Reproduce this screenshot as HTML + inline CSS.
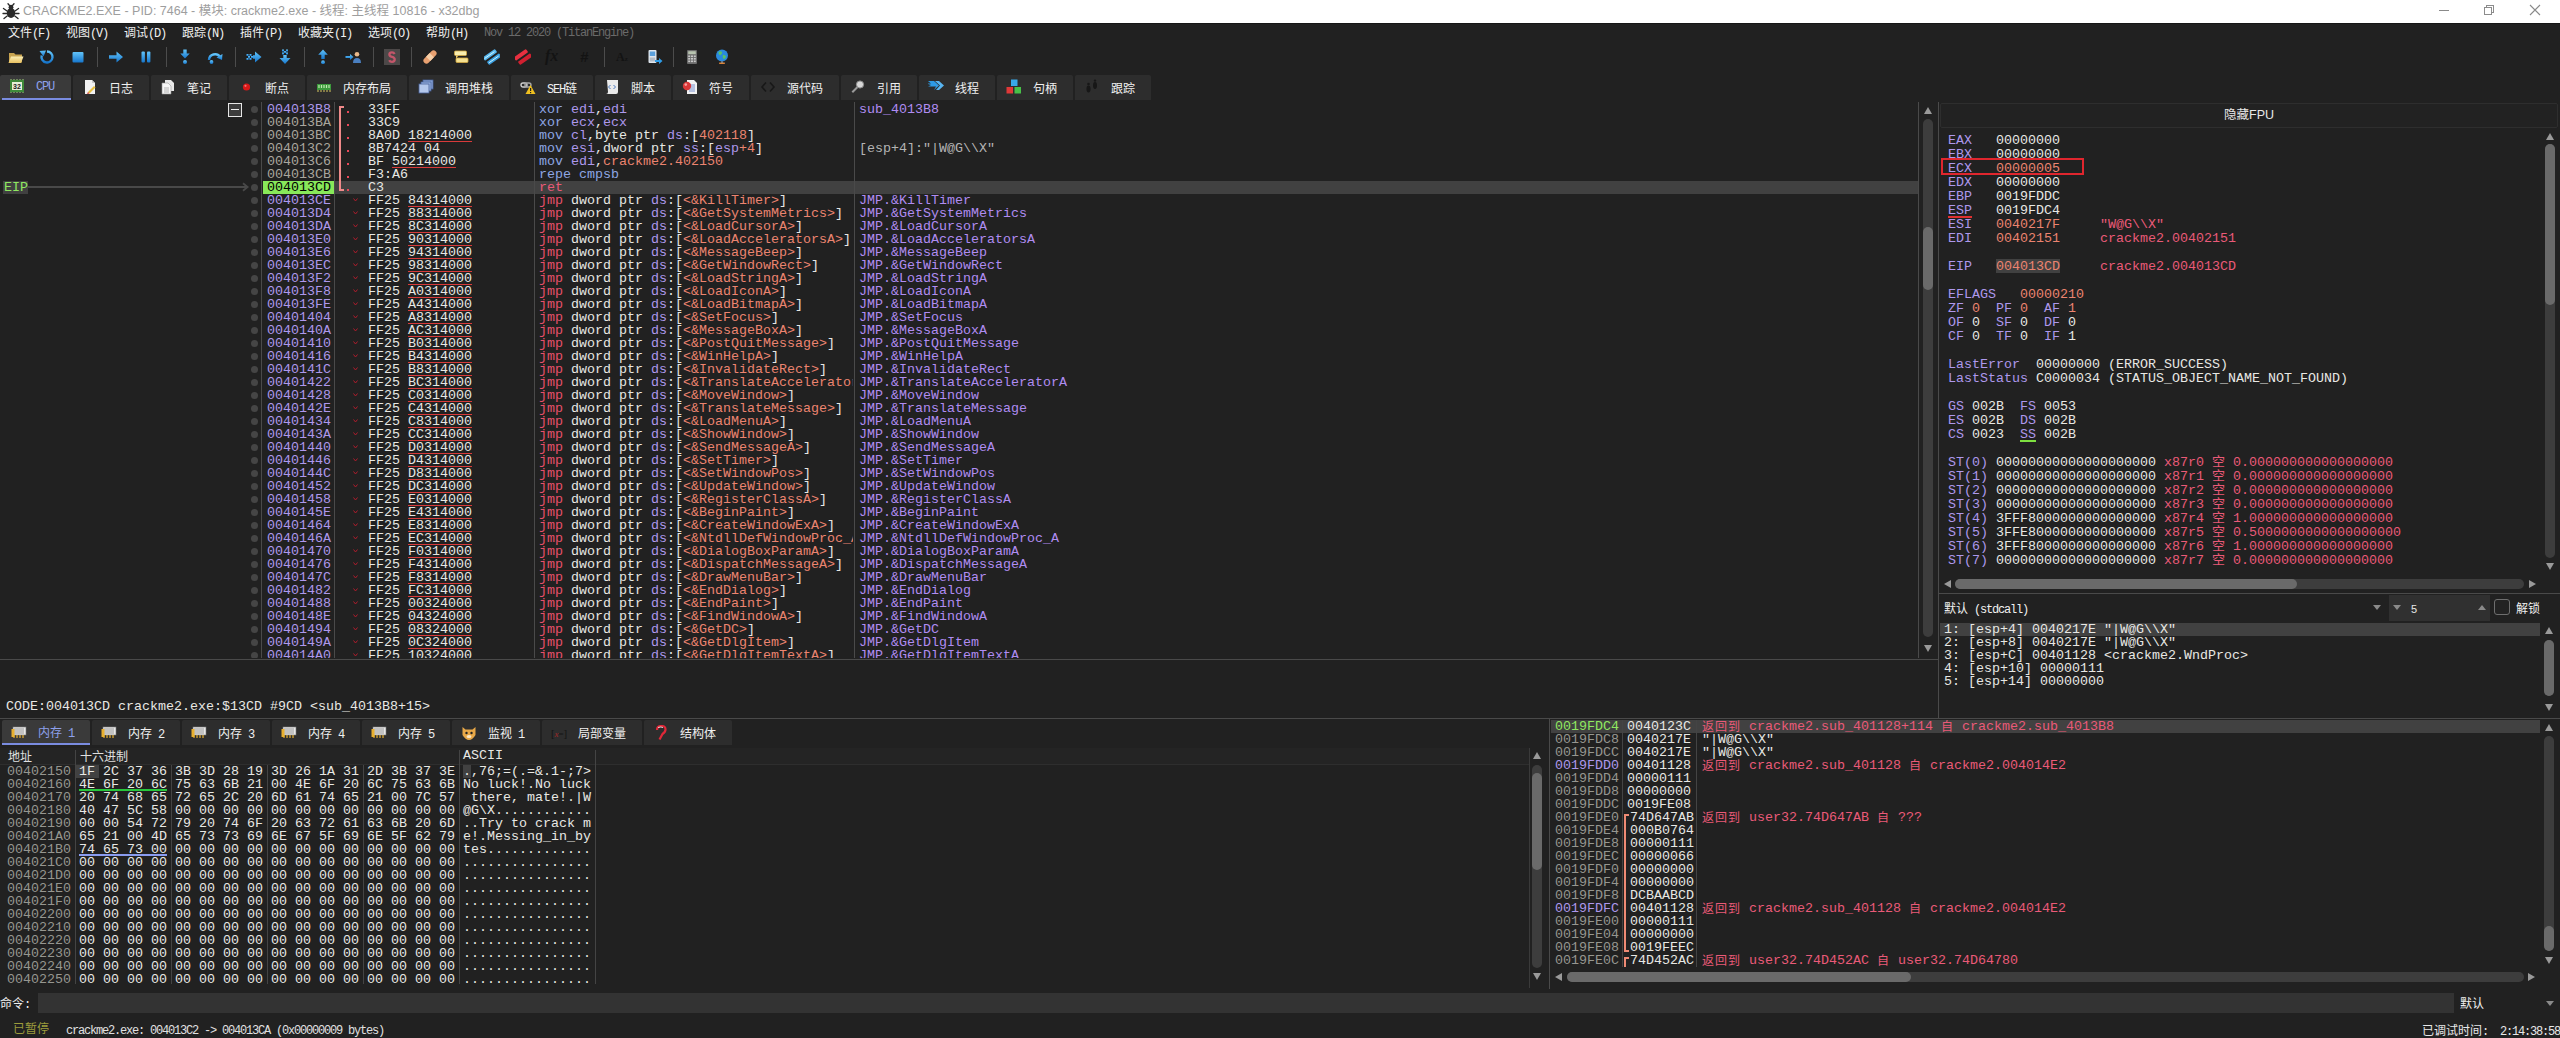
<!DOCTYPE html>
<html lang="zh"><head><meta charset="utf-8"><title>x32dbg</title><style>
html,body{margin:0;padding:0;background:#212121;}
body{width:2560px;height:1038px;position:relative;overflow:hidden;font-family:"Liberation Sans","Noto Sans CJK SC",sans-serif;color:#e8e8e8;}
div,span,i,b{box-sizing:border-box;}
.a{position:absolute;}
.m{position:absolute;white-space:pre;font-family:"Liberation Mono","Noto Sans CJK SC",monospace;font-size:13.333px;line-height:13px;height:13px;letter-spacing:0;}
.r{position:absolute;white-space:pre;font-family:"Liberation Mono","Noto Sans CJK SC",monospace;font-size:13.333px;line-height:14px;height:14px;}
.u{position:absolute;white-space:pre;font-family:"Liberation Mono","Noto Sans CJK SC",monospace;font-size:12px;letter-spacing:-1.2px;line-height:14px;}
.u b{font-weight:normal;font-family:"Noto Sans CJK SC",sans-serif;letter-spacing:0;font-size:12px;}
.tab{position:absolute;background:#2d2d2d;border-radius:2px 2px 0 0;}
.tab.act{background:#3a3a3a;}
.tab .u{top:6px;}
.k{font-size:12px;letter-spacing:1px;position:relative;top:0.5px}
.vl{position:absolute;width:1px;background:#4a4a4a;}
.hl{position:absolute;height:1px;background:#4a4a4a;}
.sel{position:absolute;background:#414141;}
.dot{position:absolute;width:7px;height:7px;border-radius:4px;background:#454545;}
/* colours */
.cp{color:#ae98ec}.cg{color:#aaa69e}.cw{color:#e8e8e4}.cs{color:#ec8470}.cr{color:#ea5a78}.cb{color:#8ea6e4}.cj{color:#e8506a}.cc{color:#b08cf2}.cd{color:#969690}.cy{color:#b4b4b4}
.ul{text-decoration:underline;text-decoration-color:#d83a3a;text-decoration-thickness:1px;text-underline-offset:2px;text-decoration-skip-ink:none;}
.ulr{text-decoration:underline;text-decoration-color:#e03030;text-decoration-thickness:2px;text-underline-offset:2px;text-decoration-skip-ink:none;}
.ulg{text-decoration:underline;text-decoration-color:#7ee040;text-decoration-thickness:2px;text-underline-offset:2px;text-decoration-skip-ink:none;}
.trk{position:absolute;background:#3d3d3d;border-radius:5px;}
.thm{position:absolute;background:#6a6a6a;border-radius:5px;}
.tu,.td,.tl,.tr{position:absolute;width:0;height:0;border:4px solid transparent;}
.tu{border-bottom:7px solid #9a9a9a;border-top:none;}
.td{border-top:7px solid #9a9a9a;border-bottom:none;}
.tl{border-right:7px solid #9a9a9a;border-left:none;}
.tr{border-left:7px solid #9a9a9a;border-right:none;}
</style></head><body>

<div class="a" style="left:0;top:0;width:2560px;height:23px;background:#fff"></div>
<svg class="a" style="left:2px;top:3px" width="18" height="17" viewBox="0 0 18 17"><g fill="#2a2a2a" stroke="#2a2a2a" stroke-width="1.3" stroke-linecap="round"><ellipse cx="9" cy="10" rx="4.2" ry="5" stroke="none"/><circle cx="9" cy="4.2" r="2.4" stroke="none"/><path d="M5 8 L1.5 5.5 M5 10.5 L1 10.5 M5.2 13 L2 15.5 M13 8 L16.5 5.5 M13 10.5 L17 10.5 M12.8 13 L16 15.5 M7.5 2.5 L6 0.8 M10.5 2.5 L12 0.8" fill="none"/></g></svg>
<div class="a" id="ttl" style="left:23px;top:3px;font-size:12.5px;line-height:16px;color:#9e9e9e;white-space:pre">CRACKME2.EXE - PID: 7464 - 模块: crackme2.exe - 线程: 主线程 10816 - x32dbg</div>
<div class="a" style="left:2439px;top:10px;width:10px;height:1px;background:#8a8a8a"></div>
<div class="a" style="left:2484px;top:7px;width:8px;height:8px;border:1px solid #8c8c8c;background:#fff;z-index:2"></div>
<div class="a" style="left:2486px;top:5px;width:8px;height:8px;border:1px solid #8c8c8c"></div>
<div class="a" style="left:0;top:23px;width:2560px;height:1px;background:#161616"></div>
<svg class="a" style="left:2529px;top:4px" width="12" height="12"><path d="M1 1 L11 11 M11 1 L1 11" stroke="#8a8a8a" stroke-width="1.1" fill="none"/></svg>
<div class="u" style="left:8px;top:25px;color:#f0f0f0;"><b>文件</b>(F)</div>
<div class="u" style="left:66px;top:25px;color:#f0f0f0;"><b>视图</b>(V)</div>
<div class="u" style="left:124px;top:25px;color:#f0f0f0;"><b>调试</b>(D)</div>
<div class="u" style="left:182px;top:25px;color:#f0f0f0;"><b>跟踪</b>(N)</div>
<div class="u" style="left:240px;top:25px;color:#f0f0f0;"><b>插件</b>(P)</div>
<div class="u" style="left:298px;top:25px;color:#f0f0f0;"><b>收藏夹</b>(I)</div>
<div class="u" style="left:368px;top:25px;color:#f0f0f0;"><b>选项</b>(O)</div>
<div class="u" style="left:426px;top:25px;color:#f0f0f0;"><b>帮助</b>(H)</div>
<div class="u" style="left:484px;top:26px;color:#6a6a6a;">Nov 12 2020 (TitanEngine)</div>
<svg width="0" height="0" style="position:absolute"><defs><linearGradient id="gb" x1="0" y1="0" x2="0" y2="1"><stop offset="0" stop-color="#62c4fa"/><stop offset="1" stop-color="#1676cc"/></linearGradient><linearGradient id="gy" x1="0" y1="0" x2="0" y2="1"><stop offset="0" stop-color="#fbeeb4"/><stop offset="1" stop-color="#e8c060"/></linearGradient></defs></svg>
<div class="a" style="left:97px;top:47px;width:1px;height:20px;background:#4c4c4c"></div>
<div class="a" style="left:166px;top:47px;width:1px;height:20px;background:#4c4c4c"></div>
<div class="a" style="left:235px;top:47px;width:1px;height:20px;background:#4c4c4c"></div>
<div class="a" style="left:304px;top:47px;width:1px;height:20px;background:#4c4c4c"></div>
<div class="a" style="left:373px;top:47px;width:1px;height:20px;background:#4c4c4c"></div>
<div class="a" style="left:411px;top:47px;width:1px;height:20px;background:#4c4c4c"></div>
<div class="a" style="left:604px;top:47px;width:1px;height:20px;background:#4c4c4c"></div>
<div class="a" style="left:673px;top:47px;width:1px;height:20px;background:#4c4c4c"></div>
<svg class="a" style="left:8px;top:49px" width="16" height="16" viewBox="0 0 16 16"><path d="M1 4 h5 l1.5 1.5 h6.5 v8 h-13z" fill="#c8a450"/><path d="M0.5 14 l2.500 -6.500 h12.500 l-2.500 6.500z" fill="url(#gy)"/></svg>
<svg class="a" style="left:39px;top:49px" width="16" height="16" viewBox="0 0 16 16"><path d="M8 2.5 a5.5 5.5 0 1 1 -5.3 4" fill="none" stroke="url(#gb)" stroke-width="2.4"/><path d="M0.5 2 L7 1.5 L4.5 7.5z" fill="url(#gb)"/></svg>
<svg class="a" style="left:69.5px;top:49px" width="16" height="16" viewBox="0 0 16 16"><rect x="2.500" y="3" width="11" height="10.500" rx="1" fill="url(#gb)"/></svg>
<svg class="a" style="left:108px;top:49px" width="16" height="16" viewBox="0 0 16 16"><path d="M1 6.3 h7.5 v-3.8 l6.5 5.5 l-6.5 5.5 v-3.8 h-7.5z" fill="url(#gb)"/></svg>
<svg class="a" style="left:138px;top:49px" width="16" height="16" viewBox="0 0 16 16"><rect x="3.5" y="2.5" width="3.4" height="11" rx="1" fill="url(#gb)"/><rect x="9" y="2.5" width="3.4" height="11" rx="1" fill="url(#gb)"/></svg>
<svg class="a" style="left:176.5px;top:49px" width="16" height="16" viewBox="0 0 16 16"><path d="M6.3 0.5 h3.4 v4 h3 l-4.7 5 l-4.7 -5 h3z" fill="url(#gb)"/><circle cx="8" cy="13" r="2" fill="url(#gb)"/></svg>
<svg class="a" style="left:207px;top:49px" width="16" height="16" viewBox="0 0 16 16"><path d="M2 11 a6 6 0 0 1 11 -3" fill="none" stroke="url(#gb)" stroke-width="2.4"/><path d="M15.5 5 l-0.5 6 l-5.5 -2.5z" fill="url(#gb)"/><circle cx="4.5" cy="13" r="1.9" fill="url(#gb)"/></svg>
<svg class="a" style="left:246px;top:49px" width="16" height="16" viewBox="0 0 16 16"><path d="M7 6.3 h2 v-3.8 l6.5 5.5 l-6.5 5.5 v-3.8 h-2z" fill="url(#gb)"/><g fill="url(#gb)"><rect x="0.5" y="5" width="2" height="2"/><rect x="3.5" y="5" width="2" height="2"/><rect x="0.5" y="9" width="2" height="2"/><rect x="3.5" y="9" width="2" height="2"/><rect x="2" y="7" width="2" height="2"/><rect x="5" y="7" width="2" height="2"/></g></svg>
<svg class="a" style="left:276.5px;top:49px" width="16" height="16" viewBox="0 0 16 16"><path d="M6.3 6 v3 h-3.8 l5.5 6 l5.5 -6 h-3.8 v-3z" fill="url(#gb)"/><g fill="url(#gb)"><rect x="5" y="0.5" width="2" height="2"/><rect x="9" y="0.5" width="2" height="2"/><rect x="7" y="2" width="2" height="2"/><rect x="5" y="3.5" width="2" height="2"/><rect x="9" y="3.5" width="2" height="2"/></g></svg>
<svg class="a" style="left:314.5px;top:49px" width="16" height="16" viewBox="0 0 16 16"><path d="M8 0.5 l4.8 5.2 h-3.1 v4.3 h-3.4 v-4.3 h-3.1z" fill="url(#gb)"/><circle cx="8" cy="13.2" r="1.9" fill="url(#gb)"/></svg>
<svg class="a" style="left:345px;top:49px" width="16" height="16" viewBox="0 0 16 16"><path d="M0.5 7 h4.5 v-2 l3.5 3 l-3.5 3 v-2 h-4.5z" fill="url(#gb)"/><circle cx="12" cy="5.3" r="2.3" fill="#e9b98a"/><path d="M8 14 q0 -5 4 -5 q4 0 4 5z" fill="#4a7fc0"/></svg>
<svg class="a" style="left:384px;top:49px" width="16" height="16" viewBox="0 0 16 16"><rect x="0" y="0" width="16" height="16" fill="#4c4848"/><path d="M10.6 5 q-0.800 -1.600 -2.600 -1.600 q-2.600 0 -2.600 2.100 q0 1.700 2.600 2.400 q2.700 0.700 2.700 2.600 q0 2.300 -2.700 2.300 q-2 0 -2.800 -1.600" fill="none" stroke="#c4566a" stroke-width="2.3"/></svg>
<svg class="a" style="left:422px;top:49px" width="16" height="16" viewBox="0 0 16 16"><g transform="rotate(-45 8 8)"><rect x="0" y="5" width="16" height="6" rx="3" fill="#e8a070"/><rect x="5.5" y="5" width="5" height="6" fill="#f6cfa8"/></g></svg>
<svg class="a" style="left:453px;top:49px" width="16" height="16" viewBox="0 0 16 16"><rect x="1.500" y="2" width="12" height="4.500" rx="1" fill="#f8eeb0" stroke="#d4a840" stroke-width="0.8"/><rect x="3" y="9" width="12" height="4.500" rx="1" fill="#f4e090" stroke="#d4a840" stroke-width="0.8"/><path d="M3 6.500 l0 3 l2.500 -3z" fill="#f0d070"/></svg>
<svg class="a" style="left:483.5px;top:49px" width="16" height="16" viewBox="0 0 16 16"><g transform="rotate(-35 8 8)"><rect x="0" y="3" width="15" height="4" rx="1" fill="#58b6ee"/><rect x="1" y="9" width="15" height="4" rx="1" fill="#3c9fe0"/><path d="M1 5 h12 M2 11 h12" stroke="#dff" stroke-width="0.8"/></g></svg>
<svg class="a" style="left:515px;top:49px" width="16" height="16" viewBox="0 0 16 16"><g transform="rotate(-35 8 8)"><rect x="0" y="3" width="15" height="4" rx="1" fill="#e83040"/><rect x="1" y="9" width="15" height="4" rx="1" fill="#d02030"/></g></svg>
<div class="a" style="left:545px;top:46px;font:italic bold 16px 'Liberation Serif',serif;color:#131313;line-height:20px">fx</div>
<div class="a" style="left:580px;top:47px;font:italic bold 15px 'Liberation Sans',sans-serif;color:#131313;line-height:20px">#</div>
<div class="a" style="left:616px;top:49px;font:bold 12px 'Liberation Serif',serif;color:#131313;line-height:16px">A<span style="font-size:7px">z</span></div>
<svg class="a" style="left:647px;top:49px" width="16" height="16" viewBox="0 0 16 16"><rect x="1.5" y="1" width="8" height="13" rx="1" fill="#dfe6ee"/><rect x="2.8" y="2.5" width="5.4" height="4.5" fill="#5aa0dc"/><rect x="2.8" y="8.5" width="5.4" height="4" fill="#b4bcc6"/><path d="M8 11 h4 v-2 l3.5 3 l-3.5 3 v-2 h-4z" fill="#2e9be6"/></svg>
<svg class="a" style="left:683.5px;top:49px" width="16" height="16" viewBox="0 0 16 16"><rect x="3" y="1" width="10" height="14" rx="1" fill="#6c6c6c"/><rect x="4.2" y="2.2" width="7.6" height="3" fill="#b8c4b0"/><g fill="#c8c8c8"><rect x="4.2" y="6.5" width="2" height="1.6"/><rect x="7" y="6.5" width="2" height="1.6"/><rect x="9.8" y="6.5" width="2" height="1.6"/><rect x="4.2" y="9" width="2" height="1.6"/><rect x="7" y="9" width="2" height="1.6"/><rect x="9.8" y="9" width="2" height="1.6"/><rect x="4.2" y="11.5" width="2" height="1.6"/><rect x="7" y="11.5" width="2" height="1.6"/><rect x="9.8" y="11.5" width="2" height="1.6"/></g></svg>
<svg class="a" style="left:714px;top:49px" width="16" height="16" viewBox="0 0 16 16"><circle cx="8" cy="6.5" r="6" fill="#2a8ade"/><path d="M4.5 3 q2 -1.5 3.5 0 q0.5 2 -1.5 3 q-2 0.5 -2 -3z M9 6 q2.5 -0.5 3 1.5 q-0.5 2.5 -2.5 2.5 q-1.5 -1.5 -0.5 -4z" fill="#58c468"/><rect x="5" y="13.5" width="6" height="1.5" rx="0.7" fill="#d8823a"/><rect x="7.3" y="12.3" width="1.4" height="1.6" fill="#a0a0a0"/></svg>
<div class="tab act" style="left:0px;top:75px;width:71px;height:25px"></div>
<svg class="a" style="left:9px;top:79px" width="16" height="16" viewBox="0 0 16 16"><rect x="1" y="1" width="14" height="12" fill="#3f8a3a"/><rect x="3" y="3" width="10" height="8" fill="#e8f0d8"/><path d="M2 0v1M5 0v1M8 0v1M11 0v1M14 0v1M2 13v1M5 13v1M8 13v1M11 13v1M14 13v1" stroke="#9fd07a"/><text x="8" y="10" font-size="7" font-family="Liberation Sans" font-weight="bold" text-anchor="middle" fill="#222">32</text></svg>
<div class="a" style="left:2px;top:98px;width:69px;height:2px;background:#7a8ce0"></div>
<div class="u" style="left:36px;top:80px;color:#8ea0ec;">CPU</div>
<div class="tab" style="left:73px;top:75px;width:76px;height:25px"></div>
<svg class="a" style="left:82px;top:79px" width="16" height="16" viewBox="0 0 16 16"><path d="M3 1 h7 l3 3 v11 h-10z" fill="#f2f2f2"/><path d="M10 1 v3 h3z" fill="#c8c8c8"/><path d="M6 13 l6 -6 l1.5 1.5 l-6 6z" fill="#e8c040"/><path d="M5 15 l1 -2 l1.5 1.5z" fill="#d03030"/></svg>
<div class="u" style="left:109px;top:81px;color:#f0f0f0;"><b>日志</b></div>
<div class="tab" style="left:151px;top:75px;width:76px;height:25px"></div>
<svg class="a" style="left:160px;top:79px" width="16" height="16" viewBox="0 0 16 16"><path d="M5 1 h6 l3 3 v8 h-9z" fill="#e8e8e8"/><path d="M2 4 h6 l3 3 v8 h-9z" fill="#f6f6f6" stroke="#999" stroke-width="0.6"/><path d="M4 9h5M4 11h5M4 13h5" stroke="#999" stroke-width="0.7"/></svg>
<div class="u" style="left:187px;top:81px;color:#f0f0f0;"><b>笔记</b></div>
<div class="tab" style="left:229px;top:75px;width:76px;height:25px"></div>
<svg class="a" style="left:238px;top:79px" width="16" height="16" viewBox="0 0 16 16"><circle cx="8.500" cy="8" r="3.600" fill="#d81818"/><circle cx="7.500" cy="6.800" r="1.100" fill="#f07070"/></svg>
<div class="u" style="left:265px;top:81px;color:#f0f0f0;"><b>断点</b></div>
<div class="tab" style="left:307px;top:75px;width:100px;height:25px"></div>
<svg class="a" style="left:316px;top:79px" width="16" height="16" viewBox="0 0 16 16"><rect x="1" y="5" width="14" height="6" fill="#3c9a3c"/><path d="M3 6v3M5.5 6v3M8 6v3M10.5 6v3M13 6v3" stroke="#bfe8b0" stroke-width="1.2"/><path d="M2 11v2M5 11v2M8 11v2M11 11v2M14 11v2" stroke="#d8c860" stroke-width="1"/></svg>
<div class="u" style="left:343px;top:81px;color:#f0f0f0;"><b>内存布局</b></div>
<div class="tab" style="left:409px;top:75px;width:100px;height:25px"></div>
<svg class="a" style="left:418px;top:79px" width="16" height="16" viewBox="0 0 16 16"><rect x="5" y="1" width="10" height="9" fill="#8aa6d8" stroke="#46609a" stroke-width="0.8"/><rect x="3" y="3" width="10" height="9" fill="#9ab4e2" stroke="#46609a" stroke-width="0.8"/><rect x="1" y="5" width="10" height="9" fill="#b4c8ec" stroke="#46609a" stroke-width="0.8"/></svg>
<div class="u" style="left:445px;top:81px;color:#f0f0f0;"><b>调用堆栈</b></div>
<div class="tab" style="left:511px;top:75px;width:82px;height:25px"></div>
<svg class="a" style="left:520px;top:79px" width="16" height="16" viewBox="0 0 16 16"><rect x="1" y="4" width="6" height="4" rx="2" fill="none" stroke="#d0d0d0" stroke-width="1.4"/><rect x="5" y="4" width="6" height="4" rx="2" fill="none" stroke="#a8a8a8" stroke-width="1.4"/><path d="M10.5 6 l5 9 h-10z" fill="#f0c020"/><rect x="10" y="9" width="1.2" height="3" fill="#222"/><rect x="10" y="13" width="1.2" height="1.2" fill="#222"/></svg>
<div class="u" style="left:547px;top:81px;color:#f0f0f0;">SEH<b>链</b></div>
<div class="tab" style="left:595px;top:75px;width:76px;height:25px"></div>
<svg class="a" style="left:604px;top:79px" width="16" height="16" viewBox="0 0 16 16"><path d="M3 1 h11 v12 q0 2 -2 2 h-10 q2 0 2 -2 z" fill="#eaeaea"/><path d="M6.5 6 l-2 2 l2 2 M9.5 6 l2 2 l-2 2" stroke="#4878c0" fill="none" stroke-width="1"/></svg>
<div class="u" style="left:631px;top:81px;color:#f0f0f0;"><b>脚本</b></div>
<div class="tab" style="left:673px;top:75px;width:76px;height:25px"></div>
<svg class="a" style="left:682px;top:79px" width="16" height="16" viewBox="0 0 16 16"><path d="M5 1 h7 l3 3 v11 h-10z" fill="#f2f2f2"/><path d="M7 6h6M7 8h6M7 10h6M7 12h6" stroke="#5a78c8" stroke-width="0.8"/><circle cx="5" cy="7" r="4.2" fill="#d83838"/><circle cx="3.8" cy="5.6" r="1.3" fill="#f4a0a0"/></svg>
<div class="u" style="left:709px;top:81px;color:#f0f0f0;"><b>符号</b></div>
<div class="tab" style="left:751px;top:75px;width:88px;height:25px"></div>
<svg class="a" style="left:760px;top:79px" width="16" height="16" viewBox="0 0 16 16"><path d="M6 3.5 l-4 4.5 l4 4.5 M10 3.5 l4 4.5 l-4 4.5" stroke="#181818" fill="none" stroke-width="1.6"/></svg>
<div class="u" style="left:787px;top:81px;color:#f0f0f0;"><b>源代码</b></div>
<div class="tab" style="left:841px;top:75px;width:76px;height:25px"></div>
<svg class="a" style="left:850px;top:79px" width="16" height="16" viewBox="0 0 16 16"><circle cx="10" cy="5.5" r="3.6" fill="#d8d8d8" stroke="#8a8a8a" stroke-width="1"/><path d="M7.3 8.2 l-5 5" stroke="#9a9a9a" stroke-width="2"/></svg>
<div class="u" style="left:877px;top:81px;color:#f0f0f0;"><b>引用</b></div>
<div class="tab" style="left:919px;top:75px;width:76px;height:25px"></div>
<svg class="a" style="left:928px;top:79px" width="16" height="16" viewBox="0 0 16 16"><path d="M0 2 l6 0 l5 4.5 l-5 4.5 l2 -3.5 h-8 l3 -1.5 l-5 -1.5 h5z" fill="#2e9be6"/><path d="M7 2 h4 l5 4.5 l-5 4.5 h-3 l4 -4.5z" fill="#58b4f0"/></svg>
<div class="u" style="left:955px;top:81px;color:#f0f0f0;"><b>线程</b></div>
<div class="tab" style="left:997px;top:75px;width:76px;height:25px"></div>
<svg class="a" style="left:1006px;top:79px" width="16" height="16" viewBox="0 0 16 16"><rect x="5" y="0.5" width="6.5" height="6.5" fill="#38a8e8"/><rect x="0.5" y="8" width="6.5" height="6.5" fill="#e03838"/><rect x="8.5" y="8" width="6.5" height="6.5" fill="#48c048"/></svg>
<div class="u" style="left:1033px;top:81px;color:#f0f0f0;"><b>句柄</b></div>
<div class="tab" style="left:1075px;top:75px;width:76px;height:25px"></div>
<svg class="a" style="left:1084px;top:79px" width="16" height="16" viewBox="0 0 16 16"><g fill="#171717"><ellipse cx="4.5" cy="10" rx="2" ry="3.4"/><circle cx="4.5" cy="5" r="1.3"/><ellipse cx="11" cy="6.5" rx="2" ry="3.4"/><circle cx="11" cy="1.6" r="1.2"/></g></svg>
<div class="u" style="left:1111px;top:81px;color:#f0f0f0;"><b>跟踪</b></div>
<div class="sel" style="left:335px;top:181px;width:1583px;height:13px"></div>
<div class="a" style="left:263px;top:181px;width:71px;height:13px;background:#88e85a"></div>
<div class="vl" style="left:261px;top:102px;height:556px"></div>
<div class="vl" style="left:334px;top:102px;height:556px"></div>
<div class="vl" style="left:534px;top:102px;height:556px"></div>
<div class="vl" style="left:854px;top:102px;height:556px"></div>
<div class="vl" style="left:1918px;top:102px;height:556px"></div>
<div class="hl" style="left:0;top:659px;width:1938px"></div>
<div class="a" style="left:228px;top:103px;width:14px;height:14px;border:1px solid #e6e6e6;background:#3c3c3c"></div><div class="a" style="left:231px;top:109px;width:8px;height:1px;background:#f0f0f0"></div>
<div class="a" style="left:3px;top:181px;width:25px;height:13px;background:#404040"></div>
<div class="m " style="left:4px;top:181px;color:#8fe860">EIP</div>
<div class="a" style="left:28px;top:186px;width:219px;height:2px;background:#494949"></div>
<svg class="a" style="left:240px;top:182px" width="10" height="10"><path d="M3 1.2 L7.600 5 L3 8.800" fill="none" stroke="#494949" stroke-width="1.8"/></svg>
<div class="a" style="left:339px;top:106px;width:2px;height:85px;background:#f08a8a"></div>
<div class="a" style="left:339px;top:106px;width:5px;height:2px;background:#f08a8a"></div>
<div class="a" style="left:339px;top:189px;width:5px;height:2px;background:#f08a8a"></div>
<div class="a" style="left:0;top:102px;width:1918px;height:556px;overflow:hidden">
<div class="dot" style="left:251px;top:4px"></div>
<div class="m cp" style="left:267px;top:1px;">004013B8</div>
<div class="a" style="left:347px;top:9px;width:2px;height:2px;background:#e8485a"></div>
<div class="m " style="left:368px;top:1px;"><span class="cw">33FF</span></div>
<div class="m " style="left:539px;top:1px;width:314px;overflow:hidden"><span class="cb">xor </span><span class="cp">edi</span><span class="cw">,</span><span class="cp">edi</span></div>
<div class="m " style="left:859px;top:1px;"><span class="cc">sub_4013B8</span></div>
<div class="dot" style="left:251px;top:17px"></div>
<div class="m cg" style="left:267px;top:14px;">004013BA</div>
<div class="a" style="left:347px;top:22px;width:2px;height:2px;background:#e8485a"></div>
<div class="m " style="left:368px;top:14px;"><span class="cw">33C9</span></div>
<div class="m " style="left:539px;top:14px;width:314px;overflow:hidden"><span class="cb">xor </span><span class="cp">ecx</span><span class="cw">,</span><span class="cp">ecx</span></div>
<div class="dot" style="left:251px;top:30px"></div>
<div class="m cg" style="left:267px;top:27px;">004013BC</div>
<div class="a" style="left:347px;top:35px;width:2px;height:2px;background:#e8485a"></div>
<div class="m " style="left:368px;top:27px;"><span class="cw">8A0D </span><span class="cw ul">18214000</span></div>
<div class="m " style="left:539px;top:27px;width:314px;overflow:hidden"><span class="cb">mov </span><span class="cp">cl</span><span class="cw">,byte ptr </span><span class="cp">ds</span><span class="cw">:[</span><span class="cs">402118</span><span class="cw">]</span></div>
<div class="dot" style="left:251px;top:43px"></div>
<div class="m cg" style="left:267px;top:40px;">004013C2</div>
<div class="a" style="left:347px;top:48px;width:2px;height:2px;background:#e8485a"></div>
<div class="m " style="left:368px;top:40px;"><span class="cw">8B7424 04</span></div>
<div class="m " style="left:539px;top:40px;width:314px;overflow:hidden"><span class="cb">mov </span><span class="cp">esi</span><span class="cw">,dword ptr </span><span class="cp">ss</span><span class="cw">:[</span><span class="cp">esp</span><span class="cs">+4</span><span class="cw">]</span></div>
<div class="m " style="left:859px;top:40px;"><span class="cy">[esp+4]:"|W@G\\X"</span></div>
<div class="dot" style="left:251px;top:56px"></div>
<div class="m cg" style="left:267px;top:53px;">004013C6</div>
<div class="a" style="left:347px;top:61px;width:2px;height:2px;background:#e8485a"></div>
<div class="m " style="left:368px;top:53px;"><span class="cw">BF </span><span class="cw ul">50214000</span></div>
<div class="m " style="left:539px;top:53px;width:314px;overflow:hidden"><span class="cb">mov </span><span class="cp">edi</span><span class="cw">,</span><span class="cs">crackme2.402150</span></div>
<div class="dot" style="left:251px;top:69px"></div>
<div class="m cg" style="left:267px;top:66px;">004013CB</div>
<div class="a" style="left:347px;top:74px;width:2px;height:2px;background:#e8485a"></div>
<div class="m " style="left:368px;top:66px;"><span class="cw">F3:A6</span></div>
<div class="m " style="left:539px;top:66px;width:314px;overflow:hidden"><span class="cb">repe cmpsb</span></div>
<div class="dot" style="left:251px;top:82px"></div>
<div class="m " style="left:267px;top:79px;color:#000">004013CD</div>
<div class="a" style="left:347px;top:87px;width:2px;height:2px;background:#e8485a"></div>
<div class="m " style="left:368px;top:79px;"><span class="cw">C3</span></div>
<div class="m " style="left:539px;top:79px;width:314px;overflow:hidden"><span class="cr">ret</span></div>
<div class="dot" style="left:251px;top:95px"></div>
<div class="m cp" style="left:267px;top:92px;">004013CE</div>
<svg class="a" style="left:353px;top:96px" width="6" height="5"><path d="M0.5 0.5 L2.5 3 L4.5 0.5" fill="none" stroke="#b01c2c" stroke-width="1"/></svg>
<div class="m " style="left:368px;top:92px;"><span class="cw">FF25 </span><span class="cw ul">84314000</span></div>
<div class="m " style="left:539px;top:92px;width:314px;overflow:hidden"><span class="cj">jmp </span><span class="cw">dword ptr </span><span class="cp">ds</span><span class="cw">:[</span><span class="cs">&lt;&amp;KillTimer&gt;</span><span class="cw">]</span></div>
<div class="m " style="left:859px;top:92px;"><span class="cc">JMP.&amp;KillTimer</span></div>
<div class="dot" style="left:251px;top:108px"></div>
<div class="m cp" style="left:267px;top:105px;">004013D4</div>
<svg class="a" style="left:353px;top:109px" width="6" height="5"><path d="M0.5 0.5 L2.5 3 L4.5 0.5" fill="none" stroke="#b01c2c" stroke-width="1"/></svg>
<div class="m " style="left:368px;top:105px;"><span class="cw">FF25 </span><span class="cw ul">88314000</span></div>
<div class="m " style="left:539px;top:105px;width:314px;overflow:hidden"><span class="cj">jmp </span><span class="cw">dword ptr </span><span class="cp">ds</span><span class="cw">:[</span><span class="cs">&lt;&amp;GetSystemMetrics&gt;</span><span class="cw">]</span></div>
<div class="m " style="left:859px;top:105px;"><span class="cc">JMP.&amp;GetSystemMetrics</span></div>
<div class="dot" style="left:251px;top:121px"></div>
<div class="m cp" style="left:267px;top:118px;">004013DA</div>
<svg class="a" style="left:353px;top:122px" width="6" height="5"><path d="M0.5 0.5 L2.5 3 L4.5 0.5" fill="none" stroke="#b01c2c" stroke-width="1"/></svg>
<div class="m " style="left:368px;top:118px;"><span class="cw">FF25 </span><span class="cw ul">8C314000</span></div>
<div class="m " style="left:539px;top:118px;width:314px;overflow:hidden"><span class="cj">jmp </span><span class="cw">dword ptr </span><span class="cp">ds</span><span class="cw">:[</span><span class="cs">&lt;&amp;LoadCursorA&gt;</span><span class="cw">]</span></div>
<div class="m " style="left:859px;top:118px;"><span class="cc">JMP.&amp;LoadCursorA</span></div>
<div class="dot" style="left:251px;top:134px"></div>
<div class="m cp" style="left:267px;top:131px;">004013E0</div>
<svg class="a" style="left:353px;top:135px" width="6" height="5"><path d="M0.5 0.5 L2.5 3 L4.5 0.5" fill="none" stroke="#b01c2c" stroke-width="1"/></svg>
<div class="m " style="left:368px;top:131px;"><span class="cw">FF25 </span><span class="cw ul">90314000</span></div>
<div class="m " style="left:539px;top:131px;width:314px;overflow:hidden"><span class="cj">jmp </span><span class="cw">dword ptr </span><span class="cp">ds</span><span class="cw">:[</span><span class="cs">&lt;&amp;LoadAcceleratorsA&gt;</span><span class="cw">]</span></div>
<div class="m " style="left:859px;top:131px;"><span class="cc">JMP.&amp;LoadAcceleratorsA</span></div>
<div class="dot" style="left:251px;top:147px"></div>
<div class="m cp" style="left:267px;top:144px;">004013E6</div>
<svg class="a" style="left:353px;top:148px" width="6" height="5"><path d="M0.5 0.5 L2.5 3 L4.5 0.5" fill="none" stroke="#b01c2c" stroke-width="1"/></svg>
<div class="m " style="left:368px;top:144px;"><span class="cw">FF25 </span><span class="cw ul">94314000</span></div>
<div class="m " style="left:539px;top:144px;width:314px;overflow:hidden"><span class="cj">jmp </span><span class="cw">dword ptr </span><span class="cp">ds</span><span class="cw">:[</span><span class="cs">&lt;&amp;MessageBeep&gt;</span><span class="cw">]</span></div>
<div class="m " style="left:859px;top:144px;"><span class="cc">JMP.&amp;MessageBeep</span></div>
<div class="dot" style="left:251px;top:160px"></div>
<div class="m cp" style="left:267px;top:157px;">004013EC</div>
<svg class="a" style="left:353px;top:161px" width="6" height="5"><path d="M0.5 0.5 L2.5 3 L4.5 0.5" fill="none" stroke="#b01c2c" stroke-width="1"/></svg>
<div class="m " style="left:368px;top:157px;"><span class="cw">FF25 </span><span class="cw ul">98314000</span></div>
<div class="m " style="left:539px;top:157px;width:314px;overflow:hidden"><span class="cj">jmp </span><span class="cw">dword ptr </span><span class="cp">ds</span><span class="cw">:[</span><span class="cs">&lt;&amp;GetWindowRect&gt;</span><span class="cw">]</span></div>
<div class="m " style="left:859px;top:157px;"><span class="cc">JMP.&amp;GetWindowRect</span></div>
<div class="dot" style="left:251px;top:173px"></div>
<div class="m cp" style="left:267px;top:170px;">004013F2</div>
<svg class="a" style="left:353px;top:174px" width="6" height="5"><path d="M0.5 0.5 L2.5 3 L4.5 0.5" fill="none" stroke="#b01c2c" stroke-width="1"/></svg>
<div class="m " style="left:368px;top:170px;"><span class="cw">FF25 </span><span class="cw ul">9C314000</span></div>
<div class="m " style="left:539px;top:170px;width:314px;overflow:hidden"><span class="cj">jmp </span><span class="cw">dword ptr </span><span class="cp">ds</span><span class="cw">:[</span><span class="cs">&lt;&amp;LoadStringA&gt;</span><span class="cw">]</span></div>
<div class="m " style="left:859px;top:170px;"><span class="cc">JMP.&amp;LoadStringA</span></div>
<div class="dot" style="left:251px;top:186px"></div>
<div class="m cp" style="left:267px;top:183px;">004013F8</div>
<svg class="a" style="left:353px;top:187px" width="6" height="5"><path d="M0.5 0.5 L2.5 3 L4.5 0.5" fill="none" stroke="#b01c2c" stroke-width="1"/></svg>
<div class="m " style="left:368px;top:183px;"><span class="cw">FF25 </span><span class="cw ul">A0314000</span></div>
<div class="m " style="left:539px;top:183px;width:314px;overflow:hidden"><span class="cj">jmp </span><span class="cw">dword ptr </span><span class="cp">ds</span><span class="cw">:[</span><span class="cs">&lt;&amp;LoadIconA&gt;</span><span class="cw">]</span></div>
<div class="m " style="left:859px;top:183px;"><span class="cc">JMP.&amp;LoadIconA</span></div>
<div class="dot" style="left:251px;top:199px"></div>
<div class="m cp" style="left:267px;top:196px;">004013FE</div>
<svg class="a" style="left:353px;top:200px" width="6" height="5"><path d="M0.5 0.5 L2.5 3 L4.5 0.5" fill="none" stroke="#b01c2c" stroke-width="1"/></svg>
<div class="m " style="left:368px;top:196px;"><span class="cw">FF25 </span><span class="cw ul">A4314000</span></div>
<div class="m " style="left:539px;top:196px;width:314px;overflow:hidden"><span class="cj">jmp </span><span class="cw">dword ptr </span><span class="cp">ds</span><span class="cw">:[</span><span class="cs">&lt;&amp;LoadBitmapA&gt;</span><span class="cw">]</span></div>
<div class="m " style="left:859px;top:196px;"><span class="cc">JMP.&amp;LoadBitmapA</span></div>
<div class="dot" style="left:251px;top:212px"></div>
<div class="m cp" style="left:267px;top:209px;">00401404</div>
<svg class="a" style="left:353px;top:213px" width="6" height="5"><path d="M0.5 0.5 L2.5 3 L4.5 0.5" fill="none" stroke="#b01c2c" stroke-width="1"/></svg>
<div class="m " style="left:368px;top:209px;"><span class="cw">FF25 </span><span class="cw ul">A8314000</span></div>
<div class="m " style="left:539px;top:209px;width:314px;overflow:hidden"><span class="cj">jmp </span><span class="cw">dword ptr </span><span class="cp">ds</span><span class="cw">:[</span><span class="cs">&lt;&amp;SetFocus&gt;</span><span class="cw">]</span></div>
<div class="m " style="left:859px;top:209px;"><span class="cc">JMP.&amp;SetFocus</span></div>
<div class="dot" style="left:251px;top:225px"></div>
<div class="m cp" style="left:267px;top:222px;">0040140A</div>
<svg class="a" style="left:353px;top:226px" width="6" height="5"><path d="M0.5 0.5 L2.5 3 L4.5 0.5" fill="none" stroke="#b01c2c" stroke-width="1"/></svg>
<div class="m " style="left:368px;top:222px;"><span class="cw">FF25 </span><span class="cw ul">AC314000</span></div>
<div class="m " style="left:539px;top:222px;width:314px;overflow:hidden"><span class="cj">jmp </span><span class="cw">dword ptr </span><span class="cp">ds</span><span class="cw">:[</span><span class="cs">&lt;&amp;MessageBoxA&gt;</span><span class="cw">]</span></div>
<div class="m " style="left:859px;top:222px;"><span class="cc">JMP.&amp;MessageBoxA</span></div>
<div class="dot" style="left:251px;top:238px"></div>
<div class="m cp" style="left:267px;top:235px;">00401410</div>
<svg class="a" style="left:353px;top:239px" width="6" height="5"><path d="M0.5 0.5 L2.5 3 L4.5 0.5" fill="none" stroke="#b01c2c" stroke-width="1"/></svg>
<div class="m " style="left:368px;top:235px;"><span class="cw">FF25 </span><span class="cw ul">B0314000</span></div>
<div class="m " style="left:539px;top:235px;width:314px;overflow:hidden"><span class="cj">jmp </span><span class="cw">dword ptr </span><span class="cp">ds</span><span class="cw">:[</span><span class="cs">&lt;&amp;PostQuitMessage&gt;</span><span class="cw">]</span></div>
<div class="m " style="left:859px;top:235px;"><span class="cc">JMP.&amp;PostQuitMessage</span></div>
<div class="dot" style="left:251px;top:251px"></div>
<div class="m cp" style="left:267px;top:248px;">00401416</div>
<svg class="a" style="left:353px;top:252px" width="6" height="5"><path d="M0.5 0.5 L2.5 3 L4.5 0.5" fill="none" stroke="#b01c2c" stroke-width="1"/></svg>
<div class="m " style="left:368px;top:248px;"><span class="cw">FF25 </span><span class="cw ul">B4314000</span></div>
<div class="m " style="left:539px;top:248px;width:314px;overflow:hidden"><span class="cj">jmp </span><span class="cw">dword ptr </span><span class="cp">ds</span><span class="cw">:[</span><span class="cs">&lt;&amp;WinHelpA&gt;</span><span class="cw">]</span></div>
<div class="m " style="left:859px;top:248px;"><span class="cc">JMP.&amp;WinHelpA</span></div>
<div class="dot" style="left:251px;top:264px"></div>
<div class="m cp" style="left:267px;top:261px;">0040141C</div>
<svg class="a" style="left:353px;top:265px" width="6" height="5"><path d="M0.5 0.5 L2.5 3 L4.5 0.5" fill="none" stroke="#b01c2c" stroke-width="1"/></svg>
<div class="m " style="left:368px;top:261px;"><span class="cw">FF25 </span><span class="cw ul">B8314000</span></div>
<div class="m " style="left:539px;top:261px;width:314px;overflow:hidden"><span class="cj">jmp </span><span class="cw">dword ptr </span><span class="cp">ds</span><span class="cw">:[</span><span class="cs">&lt;&amp;InvalidateRect&gt;</span><span class="cw">]</span></div>
<div class="m " style="left:859px;top:261px;"><span class="cc">JMP.&amp;InvalidateRect</span></div>
<div class="dot" style="left:251px;top:277px"></div>
<div class="m cp" style="left:267px;top:274px;">00401422</div>
<svg class="a" style="left:353px;top:278px" width="6" height="5"><path d="M0.5 0.5 L2.5 3 L4.5 0.5" fill="none" stroke="#b01c2c" stroke-width="1"/></svg>
<div class="m " style="left:368px;top:274px;"><span class="cw">FF25 </span><span class="cw ul">BC314000</span></div>
<div class="m " style="left:539px;top:274px;width:314px;overflow:hidden"><span class="cj">jmp </span><span class="cw">dword ptr </span><span class="cp">ds</span><span class="cw">:[</span><span class="cs">&lt;&amp;TranslateAcceleratorA&gt;</span><span class="cw">]</span></div>
<div class="m " style="left:859px;top:274px;"><span class="cc">JMP.&amp;TranslateAcceleratorA</span></div>
<div class="dot" style="left:251px;top:290px"></div>
<div class="m cp" style="left:267px;top:287px;">00401428</div>
<svg class="a" style="left:353px;top:291px" width="6" height="5"><path d="M0.5 0.5 L2.5 3 L4.5 0.5" fill="none" stroke="#b01c2c" stroke-width="1"/></svg>
<div class="m " style="left:368px;top:287px;"><span class="cw">FF25 </span><span class="cw ul">C0314000</span></div>
<div class="m " style="left:539px;top:287px;width:314px;overflow:hidden"><span class="cj">jmp </span><span class="cw">dword ptr </span><span class="cp">ds</span><span class="cw">:[</span><span class="cs">&lt;&amp;MoveWindow&gt;</span><span class="cw">]</span></div>
<div class="m " style="left:859px;top:287px;"><span class="cc">JMP.&amp;MoveWindow</span></div>
<div class="dot" style="left:251px;top:303px"></div>
<div class="m cp" style="left:267px;top:300px;">0040142E</div>
<svg class="a" style="left:353px;top:304px" width="6" height="5"><path d="M0.5 0.5 L2.5 3 L4.5 0.5" fill="none" stroke="#b01c2c" stroke-width="1"/></svg>
<div class="m " style="left:368px;top:300px;"><span class="cw">FF25 </span><span class="cw ul">C4314000</span></div>
<div class="m " style="left:539px;top:300px;width:314px;overflow:hidden"><span class="cj">jmp </span><span class="cw">dword ptr </span><span class="cp">ds</span><span class="cw">:[</span><span class="cs">&lt;&amp;TranslateMessage&gt;</span><span class="cw">]</span></div>
<div class="m " style="left:859px;top:300px;"><span class="cc">JMP.&amp;TranslateMessage</span></div>
<div class="dot" style="left:251px;top:316px"></div>
<div class="m cp" style="left:267px;top:313px;">00401434</div>
<svg class="a" style="left:353px;top:317px" width="6" height="5"><path d="M0.5 0.5 L2.5 3 L4.5 0.5" fill="none" stroke="#b01c2c" stroke-width="1"/></svg>
<div class="m " style="left:368px;top:313px;"><span class="cw">FF25 </span><span class="cw ul">C8314000</span></div>
<div class="m " style="left:539px;top:313px;width:314px;overflow:hidden"><span class="cj">jmp </span><span class="cw">dword ptr </span><span class="cp">ds</span><span class="cw">:[</span><span class="cs">&lt;&amp;LoadMenuA&gt;</span><span class="cw">]</span></div>
<div class="m " style="left:859px;top:313px;"><span class="cc">JMP.&amp;LoadMenuA</span></div>
<div class="dot" style="left:251px;top:329px"></div>
<div class="m cp" style="left:267px;top:326px;">0040143A</div>
<svg class="a" style="left:353px;top:330px" width="6" height="5"><path d="M0.5 0.5 L2.5 3 L4.5 0.5" fill="none" stroke="#b01c2c" stroke-width="1"/></svg>
<div class="m " style="left:368px;top:326px;"><span class="cw">FF25 </span><span class="cw ul">CC314000</span></div>
<div class="m " style="left:539px;top:326px;width:314px;overflow:hidden"><span class="cj">jmp </span><span class="cw">dword ptr </span><span class="cp">ds</span><span class="cw">:[</span><span class="cs">&lt;&amp;ShowWindow&gt;</span><span class="cw">]</span></div>
<div class="m " style="left:859px;top:326px;"><span class="cc">JMP.&amp;ShowWindow</span></div>
<div class="dot" style="left:251px;top:342px"></div>
<div class="m cp" style="left:267px;top:339px;">00401440</div>
<svg class="a" style="left:353px;top:343px" width="6" height="5"><path d="M0.5 0.5 L2.5 3 L4.5 0.5" fill="none" stroke="#b01c2c" stroke-width="1"/></svg>
<div class="m " style="left:368px;top:339px;"><span class="cw">FF25 </span><span class="cw ul">D0314000</span></div>
<div class="m " style="left:539px;top:339px;width:314px;overflow:hidden"><span class="cj">jmp </span><span class="cw">dword ptr </span><span class="cp">ds</span><span class="cw">:[</span><span class="cs">&lt;&amp;SendMessageA&gt;</span><span class="cw">]</span></div>
<div class="m " style="left:859px;top:339px;"><span class="cc">JMP.&amp;SendMessageA</span></div>
<div class="dot" style="left:251px;top:355px"></div>
<div class="m cp" style="left:267px;top:352px;">00401446</div>
<svg class="a" style="left:353px;top:356px" width="6" height="5"><path d="M0.5 0.5 L2.5 3 L4.5 0.5" fill="none" stroke="#b01c2c" stroke-width="1"/></svg>
<div class="m " style="left:368px;top:352px;"><span class="cw">FF25 </span><span class="cw ul">D4314000</span></div>
<div class="m " style="left:539px;top:352px;width:314px;overflow:hidden"><span class="cj">jmp </span><span class="cw">dword ptr </span><span class="cp">ds</span><span class="cw">:[</span><span class="cs">&lt;&amp;SetTimer&gt;</span><span class="cw">]</span></div>
<div class="m " style="left:859px;top:352px;"><span class="cc">JMP.&amp;SetTimer</span></div>
<div class="dot" style="left:251px;top:368px"></div>
<div class="m cp" style="left:267px;top:365px;">0040144C</div>
<svg class="a" style="left:353px;top:369px" width="6" height="5"><path d="M0.5 0.5 L2.5 3 L4.5 0.5" fill="none" stroke="#b01c2c" stroke-width="1"/></svg>
<div class="m " style="left:368px;top:365px;"><span class="cw">FF25 </span><span class="cw ul">D8314000</span></div>
<div class="m " style="left:539px;top:365px;width:314px;overflow:hidden"><span class="cj">jmp </span><span class="cw">dword ptr </span><span class="cp">ds</span><span class="cw">:[</span><span class="cs">&lt;&amp;SetWindowPos&gt;</span><span class="cw">]</span></div>
<div class="m " style="left:859px;top:365px;"><span class="cc">JMP.&amp;SetWindowPos</span></div>
<div class="dot" style="left:251px;top:381px"></div>
<div class="m cp" style="left:267px;top:378px;">00401452</div>
<svg class="a" style="left:353px;top:382px" width="6" height="5"><path d="M0.5 0.5 L2.5 3 L4.5 0.5" fill="none" stroke="#b01c2c" stroke-width="1"/></svg>
<div class="m " style="left:368px;top:378px;"><span class="cw">FF25 </span><span class="cw ul">DC314000</span></div>
<div class="m " style="left:539px;top:378px;width:314px;overflow:hidden"><span class="cj">jmp </span><span class="cw">dword ptr </span><span class="cp">ds</span><span class="cw">:[</span><span class="cs">&lt;&amp;UpdateWindow&gt;</span><span class="cw">]</span></div>
<div class="m " style="left:859px;top:378px;"><span class="cc">JMP.&amp;UpdateWindow</span></div>
<div class="dot" style="left:251px;top:394px"></div>
<div class="m cp" style="left:267px;top:391px;">00401458</div>
<svg class="a" style="left:353px;top:395px" width="6" height="5"><path d="M0.5 0.5 L2.5 3 L4.5 0.5" fill="none" stroke="#b01c2c" stroke-width="1"/></svg>
<div class="m " style="left:368px;top:391px;"><span class="cw">FF25 </span><span class="cw ul">E0314000</span></div>
<div class="m " style="left:539px;top:391px;width:314px;overflow:hidden"><span class="cj">jmp </span><span class="cw">dword ptr </span><span class="cp">ds</span><span class="cw">:[</span><span class="cs">&lt;&amp;RegisterClassA&gt;</span><span class="cw">]</span></div>
<div class="m " style="left:859px;top:391px;"><span class="cc">JMP.&amp;RegisterClassA</span></div>
<div class="dot" style="left:251px;top:407px"></div>
<div class="m cp" style="left:267px;top:404px;">0040145E</div>
<svg class="a" style="left:353px;top:408px" width="6" height="5"><path d="M0.5 0.5 L2.5 3 L4.5 0.5" fill="none" stroke="#b01c2c" stroke-width="1"/></svg>
<div class="m " style="left:368px;top:404px;"><span class="cw">FF25 </span><span class="cw ul">E4314000</span></div>
<div class="m " style="left:539px;top:404px;width:314px;overflow:hidden"><span class="cj">jmp </span><span class="cw">dword ptr </span><span class="cp">ds</span><span class="cw">:[</span><span class="cs">&lt;&amp;BeginPaint&gt;</span><span class="cw">]</span></div>
<div class="m " style="left:859px;top:404px;"><span class="cc">JMP.&amp;BeginPaint</span></div>
<div class="dot" style="left:251px;top:420px"></div>
<div class="m cp" style="left:267px;top:417px;">00401464</div>
<svg class="a" style="left:353px;top:421px" width="6" height="5"><path d="M0.5 0.5 L2.5 3 L4.5 0.5" fill="none" stroke="#b01c2c" stroke-width="1"/></svg>
<div class="m " style="left:368px;top:417px;"><span class="cw">FF25 </span><span class="cw ul">E8314000</span></div>
<div class="m " style="left:539px;top:417px;width:314px;overflow:hidden"><span class="cj">jmp </span><span class="cw">dword ptr </span><span class="cp">ds</span><span class="cw">:[</span><span class="cs">&lt;&amp;CreateWindowExA&gt;</span><span class="cw">]</span></div>
<div class="m " style="left:859px;top:417px;"><span class="cc">JMP.&amp;CreateWindowExA</span></div>
<div class="dot" style="left:251px;top:433px"></div>
<div class="m cp" style="left:267px;top:430px;">0040146A</div>
<svg class="a" style="left:353px;top:434px" width="6" height="5"><path d="M0.5 0.5 L2.5 3 L4.5 0.5" fill="none" stroke="#b01c2c" stroke-width="1"/></svg>
<div class="m " style="left:368px;top:430px;"><span class="cw">FF25 </span><span class="cw ul">EC314000</span></div>
<div class="m " style="left:539px;top:430px;width:314px;overflow:hidden"><span class="cj">jmp </span><span class="cw">dword ptr </span><span class="cp">ds</span><span class="cw">:[</span><span class="cs">&lt;&amp;NtdllDefWindowProc_A&gt;</span><span class="cw">]</span></div>
<div class="m " style="left:859px;top:430px;"><span class="cc">JMP.&amp;NtdllDefWindowProc_A</span></div>
<div class="dot" style="left:251px;top:446px"></div>
<div class="m cp" style="left:267px;top:443px;">00401470</div>
<svg class="a" style="left:353px;top:447px" width="6" height="5"><path d="M0.5 0.5 L2.5 3 L4.5 0.5" fill="none" stroke="#b01c2c" stroke-width="1"/></svg>
<div class="m " style="left:368px;top:443px;"><span class="cw">FF25 </span><span class="cw ul">F0314000</span></div>
<div class="m " style="left:539px;top:443px;width:314px;overflow:hidden"><span class="cj">jmp </span><span class="cw">dword ptr </span><span class="cp">ds</span><span class="cw">:[</span><span class="cs">&lt;&amp;DialogBoxParamA&gt;</span><span class="cw">]</span></div>
<div class="m " style="left:859px;top:443px;"><span class="cc">JMP.&amp;DialogBoxParamA</span></div>
<div class="dot" style="left:251px;top:459px"></div>
<div class="m cp" style="left:267px;top:456px;">00401476</div>
<svg class="a" style="left:353px;top:460px" width="6" height="5"><path d="M0.5 0.5 L2.5 3 L4.5 0.5" fill="none" stroke="#b01c2c" stroke-width="1"/></svg>
<div class="m " style="left:368px;top:456px;"><span class="cw">FF25 </span><span class="cw ul">F4314000</span></div>
<div class="m " style="left:539px;top:456px;width:314px;overflow:hidden"><span class="cj">jmp </span><span class="cw">dword ptr </span><span class="cp">ds</span><span class="cw">:[</span><span class="cs">&lt;&amp;DispatchMessageA&gt;</span><span class="cw">]</span></div>
<div class="m " style="left:859px;top:456px;"><span class="cc">JMP.&amp;DispatchMessageA</span></div>
<div class="dot" style="left:251px;top:472px"></div>
<div class="m cp" style="left:267px;top:469px;">0040147C</div>
<svg class="a" style="left:353px;top:473px" width="6" height="5"><path d="M0.5 0.5 L2.5 3 L4.5 0.5" fill="none" stroke="#b01c2c" stroke-width="1"/></svg>
<div class="m " style="left:368px;top:469px;"><span class="cw">FF25 </span><span class="cw ul">F8314000</span></div>
<div class="m " style="left:539px;top:469px;width:314px;overflow:hidden"><span class="cj">jmp </span><span class="cw">dword ptr </span><span class="cp">ds</span><span class="cw">:[</span><span class="cs">&lt;&amp;DrawMenuBar&gt;</span><span class="cw">]</span></div>
<div class="m " style="left:859px;top:469px;"><span class="cc">JMP.&amp;DrawMenuBar</span></div>
<div class="dot" style="left:251px;top:485px"></div>
<div class="m cp" style="left:267px;top:482px;">00401482</div>
<svg class="a" style="left:353px;top:486px" width="6" height="5"><path d="M0.5 0.5 L2.5 3 L4.5 0.5" fill="none" stroke="#b01c2c" stroke-width="1"/></svg>
<div class="m " style="left:368px;top:482px;"><span class="cw">FF25 </span><span class="cw ul">FC314000</span></div>
<div class="m " style="left:539px;top:482px;width:314px;overflow:hidden"><span class="cj">jmp </span><span class="cw">dword ptr </span><span class="cp">ds</span><span class="cw">:[</span><span class="cs">&lt;&amp;EndDialog&gt;</span><span class="cw">]</span></div>
<div class="m " style="left:859px;top:482px;"><span class="cc">JMP.&amp;EndDialog</span></div>
<div class="dot" style="left:251px;top:498px"></div>
<div class="m cp" style="left:267px;top:495px;">00401488</div>
<svg class="a" style="left:353px;top:499px" width="6" height="5"><path d="M0.5 0.5 L2.5 3 L4.5 0.5" fill="none" stroke="#b01c2c" stroke-width="1"/></svg>
<div class="m " style="left:368px;top:495px;"><span class="cw">FF25 </span><span class="cw ul">00324000</span></div>
<div class="m " style="left:539px;top:495px;width:314px;overflow:hidden"><span class="cj">jmp </span><span class="cw">dword ptr </span><span class="cp">ds</span><span class="cw">:[</span><span class="cs">&lt;&amp;EndPaint&gt;</span><span class="cw">]</span></div>
<div class="m " style="left:859px;top:495px;"><span class="cc">JMP.&amp;EndPaint</span></div>
<div class="dot" style="left:251px;top:511px"></div>
<div class="m cp" style="left:267px;top:508px;">0040148E</div>
<svg class="a" style="left:353px;top:512px" width="6" height="5"><path d="M0.5 0.5 L2.5 3 L4.5 0.5" fill="none" stroke="#b01c2c" stroke-width="1"/></svg>
<div class="m " style="left:368px;top:508px;"><span class="cw">FF25 </span><span class="cw ul">04324000</span></div>
<div class="m " style="left:539px;top:508px;width:314px;overflow:hidden"><span class="cj">jmp </span><span class="cw">dword ptr </span><span class="cp">ds</span><span class="cw">:[</span><span class="cs">&lt;&amp;FindWindowA&gt;</span><span class="cw">]</span></div>
<div class="m " style="left:859px;top:508px;"><span class="cc">JMP.&amp;FindWindowA</span></div>
<div class="dot" style="left:251px;top:524px"></div>
<div class="m cp" style="left:267px;top:521px;">00401494</div>
<svg class="a" style="left:353px;top:525px" width="6" height="5"><path d="M0.5 0.5 L2.5 3 L4.5 0.5" fill="none" stroke="#b01c2c" stroke-width="1"/></svg>
<div class="m " style="left:368px;top:521px;"><span class="cw">FF25 </span><span class="cw ul">08324000</span></div>
<div class="m " style="left:539px;top:521px;width:314px;overflow:hidden"><span class="cj">jmp </span><span class="cw">dword ptr </span><span class="cp">ds</span><span class="cw">:[</span><span class="cs">&lt;&amp;GetDC&gt;</span><span class="cw">]</span></div>
<div class="m " style="left:859px;top:521px;"><span class="cc">JMP.&amp;GetDC</span></div>
<div class="dot" style="left:251px;top:537px"></div>
<div class="m cp" style="left:267px;top:534px;">0040149A</div>
<svg class="a" style="left:353px;top:538px" width="6" height="5"><path d="M0.5 0.5 L2.5 3 L4.5 0.5" fill="none" stroke="#b01c2c" stroke-width="1"/></svg>
<div class="m " style="left:368px;top:534px;"><span class="cw">FF25 </span><span class="cw ul">0C324000</span></div>
<div class="m " style="left:539px;top:534px;width:314px;overflow:hidden"><span class="cj">jmp </span><span class="cw">dword ptr </span><span class="cp">ds</span><span class="cw">:[</span><span class="cs">&lt;&amp;GetDlgItem&gt;</span><span class="cw">]</span></div>
<div class="m " style="left:859px;top:534px;"><span class="cc">JMP.&amp;GetDlgItem</span></div>
<div class="dot" style="left:251px;top:550px"></div>
<div class="m cp" style="left:267px;top:547px;">004014A0</div>
<svg class="a" style="left:353px;top:551px" width="6" height="5"><path d="M0.5 0.5 L2.5 3 L4.5 0.5" fill="none" stroke="#b01c2c" stroke-width="1"/></svg>
<div class="m " style="left:368px;top:547px;"><span class="cw">FF25 </span><span class="cw ul">10324000</span></div>
<div class="m " style="left:539px;top:547px;width:314px;overflow:hidden"><span class="cj">jmp </span><span class="cw">dword ptr </span><span class="cp">ds</span><span class="cw">:[</span><span class="cs">&lt;&amp;GetDlgItemTextA&gt;</span><span class="cw">]</span></div>
<div class="m " style="left:859px;top:547px;"><span class="cc">JMP.&amp;GetDlgItemTextA</span></div>
</div>
<div class="tu" style="left:1924px;top:107px"></div>
<div class="trk" style="left:1923px;top:119px;width:10px;height:518px"></div>
<div class="thm" style="left:1923px;top:227px;width:10px;height:63px"></div>
<div class="td" style="left:1924px;top:645px"></div>
<div class="m cw" style="left:6px;top:700px;">CODE:004013CD crackme2.exe:$13CD #9CD &lt;sub_4013B8+15&gt;</div>
<div class="hl" style="left:0;top:718px;width:2560px"></div>
<div class="vl" style="left:1938px;top:102px;height:616px"></div>
<div class="a" style="left:1940px;top:103px;width:618px;height:25px;border:1px solid #2e2e2e;border-radius:2px;background:#222"></div>
<div class="a" style="left:2224px;top:107px;font-size:12.5px;line-height:16px;color:#e8e8e8;white-space:pre;font-family:'Liberation Sans','Noto Sans CJK SC',sans-serif">隐藏FPU</div>
<div class="r" style="left:1948px;top:134px;"><span class="cp">EAX</span></div>
<div class="r" style="left:1996px;top:134px;"><span class="cw">00000000</span></div>
<div class="r" style="left:1948px;top:148px;"><span class="cp">EBX</span></div>
<div class="r" style="left:1996px;top:148px;"><span class="cw">00000000</span></div>
<div class="r" style="left:1948px;top:162px;"><span class="cp">ECX</span></div>
<div class="r" style="left:1996px;top:162px;"><span class="cs">00000005</span></div>
<div class="r" style="left:1948px;top:176px;"><span class="cp">EDX</span></div>
<div class="r" style="left:1996px;top:176px;"><span class="cw">00000000</span></div>
<div class="r" style="left:1948px;top:190px;"><span class="cp">EBP</span></div>
<div class="r" style="left:1996px;top:190px;"><span class="cw">0019FDDC</span></div>
<div class="r" style="left:1948px;top:204px;"><span class="cp ulr">ESP</span></div>
<div class="r" style="left:1996px;top:204px;"><span class="cw">0019FDC4</span></div>
<div class="r" style="left:1948px;top:218px;"><span class="cp">ESI</span></div>
<div class="r" style="left:1996px;top:218px;"><span class="cs">0040217F</span></div>
<div class="r" style="left:2100px;top:218px;"><span class="cr">"W@G\\X"</span></div>
<div class="r" style="left:1948px;top:232px;"><span class="cp">EDI</span></div>
<div class="r" style="left:1996px;top:232px;"><span class="cs">00402151</span></div>
<div class="r" style="left:2100px;top:232px;"><span class="cr">crackme2.00402151</span></div>
<div class="sel" style="left:1996px;top:259px;width:64px;height:14px"></div>
<div class="r" style="left:1948px;top:260px;"><span class="cp">EIP</span></div>
<div class="r" style="left:1996px;top:260px;"><span class="cs">004013CD</span></div>
<div class="r" style="left:2100px;top:260px;"><span class="cr">crackme2.004013CD</span></div>
<div class="r" style="left:1948px;top:288px;"><span class="cp">EFLAGS</span></div>
<div class="r" style="left:2020px;top:288px;"><span class="cs">00000210</span></div>
<div class="r" style="left:1948px;top:302px;"><span class="cp">ZF</span></div>
<div class="r" style="left:1972px;top:302px;"><span class="cs">0</span></div>
<div class="r" style="left:1996px;top:302px;"><span class="cp">PF</span></div>
<div class="r" style="left:2020px;top:302px;"><span class="cs">0</span></div>
<div class="r" style="left:2044px;top:302px;"><span class="cp">AF</span></div>
<div class="r" style="left:2068px;top:302px;"><span class="cs">1</span></div>
<div class="r" style="left:1948px;top:316px;"><span class="cp">OF</span></div>
<div class="r" style="left:1972px;top:316px;"><span class="cw">0</span></div>
<div class="r" style="left:1996px;top:316px;"><span class="cp">SF</span></div>
<div class="r" style="left:2020px;top:316px;"><span class="cw">0</span></div>
<div class="r" style="left:2044px;top:316px;"><span class="cp">DF</span></div>
<div class="r" style="left:2068px;top:316px;"><span class="cw">0</span></div>
<div class="r" style="left:1948px;top:330px;"><span class="cp">CF</span></div>
<div class="r" style="left:1972px;top:330px;"><span class="cw">0</span></div>
<div class="r" style="left:1996px;top:330px;"><span class="cp">TF</span></div>
<div class="r" style="left:2020px;top:330px;"><span class="cw">0</span></div>
<div class="r" style="left:2044px;top:330px;"><span class="cp">IF</span></div>
<div class="r" style="left:2068px;top:330px;"><span class="cw">1</span></div>
<div class="r" style="left:1948px;top:358px;"><span class="cp">LastError</span></div>
<div class="r" style="left:2036px;top:358px;"><span class="cw">00000000 (ERROR_SUCCESS)</span></div>
<div class="r" style="left:1948px;top:372px;"><span class="cp">LastStatus</span></div>
<div class="r" style="left:2036px;top:372px;"><span class="cw">C0000034 (STATUS_OBJECT_NAME_NOT_FOUND)</span></div>
<div class="r" style="left:1948px;top:400px;"><span class="cp">GS</span></div>
<div class="r" style="left:1972px;top:400px;"><span class="cw">002B</span></div>
<div class="r" style="left:2020px;top:400px;"><span class="cp">FS</span></div>
<div class="r" style="left:2044px;top:400px;"><span class="cw">0053</span></div>
<div class="r" style="left:1948px;top:414px;"><span class="cp">ES</span></div>
<div class="r" style="left:1972px;top:414px;"><span class="cw">002B</span></div>
<div class="r" style="left:2020px;top:414px;"><span class="cp">DS</span></div>
<div class="r" style="left:2044px;top:414px;"><span class="cw">002B</span></div>
<div class="r" style="left:1948px;top:428px;"><span class="cp">CS</span></div>
<div class="r" style="left:1972px;top:428px;"><span class="cw">0023</span></div>
<div class="r" style="left:2020px;top:428px;"><span class="cp ulg">SS</span></div>
<div class="r" style="left:2044px;top:428px;"><span class="cw">002B</span></div>
<div class="r" style="left:1948px;top:456px;"><span class="cp">ST(0)</span></div>
<div class="r" style="left:1996px;top:456px;"><span class="cw">00000000000000000000</span></div>
<div class="r" style="left:2164px;top:456px;"><span class="cr">x87r0</span></div>
<div class="r cr" style="left:2212px;top:456px;font-size:13px">空</div>
<div class="r cr" style="left:2233px;top:456px">0.000000000000000000</div>
<div class="r" style="left:1948px;top:470px;"><span class="cp">ST(1)</span></div>
<div class="r" style="left:1996px;top:470px;"><span class="cw">00000000000000000000</span></div>
<div class="r" style="left:2164px;top:470px;"><span class="cr">x87r1</span></div>
<div class="r cr" style="left:2212px;top:470px;font-size:13px">空</div>
<div class="r cr" style="left:2233px;top:470px">0.000000000000000000</div>
<div class="r" style="left:1948px;top:484px;"><span class="cp">ST(2)</span></div>
<div class="r" style="left:1996px;top:484px;"><span class="cw">00000000000000000000</span></div>
<div class="r" style="left:2164px;top:484px;"><span class="cr">x87r2</span></div>
<div class="r cr" style="left:2212px;top:484px;font-size:13px">空</div>
<div class="r cr" style="left:2233px;top:484px">0.000000000000000000</div>
<div class="r" style="left:1948px;top:498px;"><span class="cp">ST(3)</span></div>
<div class="r" style="left:1996px;top:498px;"><span class="cw">00000000000000000000</span></div>
<div class="r" style="left:2164px;top:498px;"><span class="cr">x87r3</span></div>
<div class="r cr" style="left:2212px;top:498px;font-size:13px">空</div>
<div class="r cr" style="left:2233px;top:498px">0.000000000000000000</div>
<div class="r" style="left:1948px;top:512px;"><span class="cp">ST(4)</span></div>
<div class="r" style="left:1996px;top:512px;"><span class="cw">3FFF8000000000000000</span></div>
<div class="r" style="left:2164px;top:512px;"><span class="cr">x87r4</span></div>
<div class="r cr" style="left:2212px;top:512px;font-size:13px">空</div>
<div class="r cr" style="left:2233px;top:512px">1.000000000000000000</div>
<div class="r" style="left:1948px;top:526px;"><span class="cp">ST(5)</span></div>
<div class="r" style="left:1996px;top:526px;"><span class="cw">3FFE8000000000000000</span></div>
<div class="r" style="left:2164px;top:526px;"><span class="cr">x87r5</span></div>
<div class="r cr" style="left:2212px;top:526px;font-size:13px">空</div>
<div class="r cr" style="left:2233px;top:526px">0.5000000000000000000</div>
<div class="r" style="left:1948px;top:540px;"><span class="cp">ST(6)</span></div>
<div class="r" style="left:1996px;top:540px;"><span class="cw">3FFF8000000000000000</span></div>
<div class="r" style="left:2164px;top:540px;"><span class="cr">x87r6</span></div>
<div class="r cr" style="left:2212px;top:540px;font-size:13px">空</div>
<div class="r cr" style="left:2233px;top:540px">1.000000000000000000</div>
<div class="r" style="left:1948px;top:554px;"><span class="cp">ST(7)</span></div>
<div class="r" style="left:1996px;top:554px;"><span class="cw">00000000000000000000</span></div>
<div class="r" style="left:2164px;top:554px;"><span class="cr">x87r7</span></div>
<div class="r cr" style="left:2212px;top:554px;font-size:13px">空</div>
<div class="r cr" style="left:2233px;top:554px">0.000000000000000000</div>
<div class="a" style="left:1941px;top:158px;width:143px;height:17px;border:2px solid #e0262e"></div>
<div class="tu" style="left:2546px;top:133px"></div>
<div class="trk" style="left:2545px;top:144px;width:10px;height:414px"></div>
<div class="thm" style="left:2545px;top:144px;width:10px;height:161px"></div>
<div class="td" style="left:2546px;top:563px"></div>
<div class="tl" style="left:1944px;top:580px"></div>
<div class="trk" style="left:1955px;top:579px;width:569px;height:10px"></div>
<div class="thm" style="left:1955px;top:579px;width:342px;height:10px"></div>
<div class="tr" style="left:2529px;top:580px"></div>
<div class="hl" style="left:1939px;top:593px;width:621px"></div>
<div class="u" style="left:1944px;top:601px;color:#f0f0f0;"><b>默认</b> (stdcall)</div>
<div class="td" style="left:2373px;top:605px;border-width:4px;border-top-width:5px;border-top-color:#8a8a8a"></div>
<div class="a" style="left:2389px;top:595px;width:101px;height:26px;background:#303030"></div>
<div class="td" style="left:2393px;top:605px;border-width:4px;border-top-width:5px;border-top-color:#8a8a8a"></div>
<div class="tu" style="left:2478px;top:605px;border-width:4px;border-bottom-width:5px;border-bottom-color:#8a8a8a"></div>
<div class="a" style="left:2411px;top:602px;font-size:11px;line-height:14px;color:#e8e8e8">5</div>
<div class="a" style="left:2494px;top:599px;width:16px;height:16px;border:1px solid #6e6e6e;border-radius:3px;background:#232323"></div>
<div class="u" style="left:2516px;top:601px;color:#f0f0f0;"><b>解锁</b></div>
<div class="sel" style="left:1940px;top:623px;width:600px;height:13px"></div>
<div class="m cw" style="left:1944px;top:623px;">1: [esp+4] 0040217E "|W@G\\X"</div>
<div class="m cw" style="left:1944px;top:636px;">2: [esp+8] 0040217E "|W@G\\X"</div>
<div class="m cw" style="left:1944px;top:649px;">3: [esp+C] 00401128 &lt;crackme2.WndProc&gt;</div>
<div class="m cw" style="left:1944px;top:662px;">4: [esp+10] 00000111</div>
<div class="m cw" style="left:1944px;top:675px;">5: [esp+14] 00000000</div>
<div class="tu" style="left:2545px;top:627px"></div>
<div class="trk" style="left:2544px;top:640px;width:10px;height:56px"></div>
<div class="thm" style="left:2544px;top:640px;width:10px;height:56px"></div>
<div class="td" style="left:2545px;top:704px"></div>
<div class="tab act" style="left:2px;top:720px;width:88px;height:25px"></div>
<svg class="a" style="left:11px;top:725px" width="16" height="16" viewBox="0 0 16 16"><rect x="2" y="2" width="13" height="8" fill="#e8e8e8" stroke="#777" stroke-width="0.6"/><path d="M4 3v6M6 3v6M8 3v6M10 3v6M12 3v6" stroke="#888" stroke-width="0.8"/><rect x="0.5" y="4" width="3" height="8" fill="#e8b030"/><path d="M3 10 v3 M6 10 v3 M9 10v3 M12 10v3" stroke="#e8b030" stroke-width="1.2"/></svg>
<div class="a" style="left:2px;top:743px;width:88px;height:2px;background:#7a8ce0"></div>
<div class="u" style="left:38px;top:725px;color:#8ea0ec;"><b>内存</b> 1</div>
<div class="tab" style="left:92px;top:720px;width:88px;height:25px"></div>
<svg class="a" style="left:101px;top:725px" width="16" height="16" viewBox="0 0 16 16"><rect x="2" y="2" width="13" height="8" fill="#e8e8e8" stroke="#777" stroke-width="0.6"/><path d="M4 3v6M6 3v6M8 3v6M10 3v6M12 3v6" stroke="#888" stroke-width="0.8"/><rect x="0.5" y="4" width="3" height="8" fill="#e8b030"/><path d="M3 10 v3 M6 10 v3 M9 10v3 M12 10v3" stroke="#e8b030" stroke-width="1.2"/></svg>
<div class="u" style="left:128px;top:726px;color:#f0f0f0;"><b>内存</b> 2</div>
<div class="tab" style="left:182px;top:720px;width:88px;height:25px"></div>
<svg class="a" style="left:191px;top:725px" width="16" height="16" viewBox="0 0 16 16"><rect x="2" y="2" width="13" height="8" fill="#e8e8e8" stroke="#777" stroke-width="0.6"/><path d="M4 3v6M6 3v6M8 3v6M10 3v6M12 3v6" stroke="#888" stroke-width="0.8"/><rect x="0.5" y="4" width="3" height="8" fill="#e8b030"/><path d="M3 10 v3 M6 10 v3 M9 10v3 M12 10v3" stroke="#e8b030" stroke-width="1.2"/></svg>
<div class="u" style="left:218px;top:726px;color:#f0f0f0;"><b>内存</b> 3</div>
<div class="tab" style="left:272px;top:720px;width:88px;height:25px"></div>
<svg class="a" style="left:281px;top:725px" width="16" height="16" viewBox="0 0 16 16"><rect x="2" y="2" width="13" height="8" fill="#e8e8e8" stroke="#777" stroke-width="0.6"/><path d="M4 3v6M6 3v6M8 3v6M10 3v6M12 3v6" stroke="#888" stroke-width="0.8"/><rect x="0.5" y="4" width="3" height="8" fill="#e8b030"/><path d="M3 10 v3 M6 10 v3 M9 10v3 M12 10v3" stroke="#e8b030" stroke-width="1.2"/></svg>
<div class="u" style="left:308px;top:726px;color:#f0f0f0;"><b>内存</b> 4</div>
<div class="tab" style="left:362px;top:720px;width:88px;height:25px"></div>
<svg class="a" style="left:371px;top:725px" width="16" height="16" viewBox="0 0 16 16"><rect x="2" y="2" width="13" height="8" fill="#e8e8e8" stroke="#777" stroke-width="0.6"/><path d="M4 3v6M6 3v6M8 3v6M10 3v6M12 3v6" stroke="#888" stroke-width="0.8"/><rect x="0.5" y="4" width="3" height="8" fill="#e8b030"/><path d="M3 10 v3 M6 10 v3 M9 10v3 M12 10v3" stroke="#e8b030" stroke-width="1.2"/></svg>
<div class="u" style="left:398px;top:726px;color:#f0f0f0;"><b>内存</b> 5</div>
<div class="tab" style="left:452px;top:720px;width:88px;height:25px"></div>
<svg class="a" style="left:461px;top:725px" width="16" height="16" viewBox="0 0 16 16"><path d="M1.5 2 l3 2.5 h7 l3 -2.5 v8 q-3 5 -6.5 5 q-3.500 0 -6.5 -5z" fill="#e8a848"/><circle cx="5.5" cy="8" r="1.2" fill="#222"/><circle cx="10.5" cy="8" r="1.2" fill="#222"/><ellipse cx="8" cy="11.5" rx="2.4" ry="1.6" fill="#fbe8c8"/></svg>
<div class="u" style="left:488px;top:726px;color:#f0f0f0;"><b>监视</b> 1</div>
<div class="tab" style="left:542px;top:720px;width:100px;height:25px"></div>
<svg class="a" style="left:551px;top:725px" width="16" height="16" viewBox="0 0 16 16"><text x="0" y="12" font-size="11" font-family="Liberation Serif" fill="#141414">[</text><text x="3.5" y="11.5" font-size="9" font-style="italic" font-family="Liberation Serif" fill="#a02828">x</text><text x="7.5" y="11.5" font-size="9" font-family="Liberation Serif" fill="#141414">=</text><text x="12.5" y="12" font-size="11" font-family="Liberation Serif" fill="#141414">]</text></svg>
<div class="u" style="left:578px;top:726px;color:#f0f0f0;"><b>局部变量</b></div>
<div class="tab" style="left:644px;top:720px;width:88px;height:25px"></div>
<svg class="a" style="left:653px;top:725px" width="16" height="16" viewBox="0 0 16 16"><path d="M4 5 q0 -4 4.5 -4 q4 0 4 3.500 q0 2.500 -3 4.500 l-3 5.500" fill="none" stroke="#e02838" stroke-width="2.2"/><path d="M5 2.5 q3 -1 5 0" stroke="#fff" stroke-width="0.8" fill="none"/></svg>
<div class="u" style="left:680px;top:726px;color:#f0f0f0;"><b>结构体</b></div>
<div class="a" style="left:0;top:748px;width:1529px;height:16px;background:#242424"></div>
<div class="hl" style="left:0;top:764px;width:1529px;background:#2e2e2e"></div>
<div class="u" style="left:8px;top:749px;color:#e0e0e0;"><b>地址</b></div>
<div class="u" style="left:80px;top:749px;color:#e0e0e0;"><b>十六进制</b></div>
<div class="m cw" style="left:463px;top:749px;">ASCII</div>
<div class="vl" style="left:75px;top:750px;height:234px;background:#444"></div>
<div class="vl" style="left:459px;top:750px;height:234px;background:#444"></div>
<div class="vl" style="left:595px;top:750px;height:234px;background:#444"></div>
<div class="vl" style="left:171px;top:765px;height:219px;background:#444"></div>
<div class="vl" style="left:267px;top:765px;height:219px;background:#444"></div>
<div class="vl" style="left:363px;top:765px;height:219px;background:#444"></div>
<div class="sel" style="left:76px;top:765px;width:23px;height:13px"></div>
<div class="sel" style="left:463px;top:765px;width:8px;height:13px"></div>
<div class="m cd" style="left:7px;top:765px;">00402150</div>
<div class="m cw" style="left:79px;top:765px;">1F 2C 37 36</div>
<div class="m cw" style="left:175px;top:765px;">3B 3D 28 19</div>
<div class="m cw" style="left:271px;top:765px;">3D 26 1A 31</div>
<div class="m cw" style="left:367px;top:765px;">2D 3B 37 3E</div>
<div class="m cw" style="left:463px;top:765px;">.,76;=(.=&amp;.1-;7&gt;</div>
<div class="m cd" style="left:7px;top:778px;">00402160</div>
<div class="m cw" style="left:79px;top:778px;">4E 6F 20 6C</div>
<div class="m cw" style="left:175px;top:778px;">75 63 6B 21</div>
<div class="m cw" style="left:271px;top:778px;">00 4E 6F 20</div>
<div class="m cw" style="left:367px;top:778px;">6C 75 63 6B</div>
<div class="m cw" style="left:463px;top:778px;">No luck!.No luck</div>
<div class="m cd" style="left:7px;top:791px;">00402170</div>
<div class="m cw" style="left:79px;top:791px;">20 74 68 65</div>
<div class="m cw" style="left:175px;top:791px;">72 65 2C 20</div>
<div class="m cw" style="left:271px;top:791px;">6D 61 74 65</div>
<div class="m cw" style="left:367px;top:791px;">21 00 7C 57</div>
<div class="m cw" style="left:463px;top:791px;"> there, mate!.|W</div>
<div class="m cd" style="left:7px;top:804px;">00402180</div>
<div class="m cw" style="left:79px;top:804px;">40 47 5C 58</div>
<div class="m cw" style="left:175px;top:804px;">00 00 00 00</div>
<div class="m cw" style="left:271px;top:804px;">00 00 00 00</div>
<div class="m cw" style="left:367px;top:804px;">00 00 00 00</div>
<div class="m cw" style="left:463px;top:804px;">@G\X............</div>
<div class="m cd" style="left:7px;top:817px;">00402190</div>
<div class="m cw" style="left:79px;top:817px;">00 00 54 72</div>
<div class="m cw" style="left:175px;top:817px;">79 20 74 6F</div>
<div class="m cw" style="left:271px;top:817px;">20 63 72 61</div>
<div class="m cw" style="left:367px;top:817px;">63 6B 20 6D</div>
<div class="m cw" style="left:463px;top:817px;">..Try to crack m</div>
<div class="m cd" style="left:7px;top:830px;">004021A0</div>
<div class="m cw" style="left:79px;top:830px;">65 21 00 4D</div>
<div class="m cw" style="left:175px;top:830px;">65 73 73 69</div>
<div class="m cw" style="left:271px;top:830px;">6E 67 5F 69</div>
<div class="m cw" style="left:367px;top:830px;">6E 5F 62 79</div>
<div class="m cw" style="left:463px;top:830px;">e!.Messing_in_by</div>
<div class="m cd" style="left:7px;top:843px;">004021B0</div>
<div class="m cw" style="left:79px;top:843px;">74 65 73 00</div>
<div class="m cw" style="left:175px;top:843px;">00 00 00 00</div>
<div class="m cw" style="left:271px;top:843px;">00 00 00 00</div>
<div class="m cw" style="left:367px;top:843px;">00 00 00 00</div>
<div class="m cw" style="left:463px;top:843px;">tes.............</div>
<div class="m cd" style="left:7px;top:856px;">004021C0</div>
<div class="m cw" style="left:79px;top:856px;">00 00 00 00</div>
<div class="m cw" style="left:175px;top:856px;">00 00 00 00</div>
<div class="m cw" style="left:271px;top:856px;">00 00 00 00</div>
<div class="m cw" style="left:367px;top:856px;">00 00 00 00</div>
<div class="m cw" style="left:463px;top:856px;">................</div>
<div class="m cd" style="left:7px;top:869px;">004021D0</div>
<div class="m cw" style="left:79px;top:869px;">00 00 00 00</div>
<div class="m cw" style="left:175px;top:869px;">00 00 00 00</div>
<div class="m cw" style="left:271px;top:869px;">00 00 00 00</div>
<div class="m cw" style="left:367px;top:869px;">00 00 00 00</div>
<div class="m cw" style="left:463px;top:869px;">................</div>
<div class="m cd" style="left:7px;top:882px;">004021E0</div>
<div class="m cw" style="left:79px;top:882px;">00 00 00 00</div>
<div class="m cw" style="left:175px;top:882px;">00 00 00 00</div>
<div class="m cw" style="left:271px;top:882px;">00 00 00 00</div>
<div class="m cw" style="left:367px;top:882px;">00 00 00 00</div>
<div class="m cw" style="left:463px;top:882px;">................</div>
<div class="m cd" style="left:7px;top:895px;">004021F0</div>
<div class="m cw" style="left:79px;top:895px;">00 00 00 00</div>
<div class="m cw" style="left:175px;top:895px;">00 00 00 00</div>
<div class="m cw" style="left:271px;top:895px;">00 00 00 00</div>
<div class="m cw" style="left:367px;top:895px;">00 00 00 00</div>
<div class="m cw" style="left:463px;top:895px;">................</div>
<div class="m cd" style="left:7px;top:908px;">00402200</div>
<div class="m cw" style="left:79px;top:908px;">00 00 00 00</div>
<div class="m cw" style="left:175px;top:908px;">00 00 00 00</div>
<div class="m cw" style="left:271px;top:908px;">00 00 00 00</div>
<div class="m cw" style="left:367px;top:908px;">00 00 00 00</div>
<div class="m cw" style="left:463px;top:908px;">................</div>
<div class="m cd" style="left:7px;top:921px;">00402210</div>
<div class="m cw" style="left:79px;top:921px;">00 00 00 00</div>
<div class="m cw" style="left:175px;top:921px;">00 00 00 00</div>
<div class="m cw" style="left:271px;top:921px;">00 00 00 00</div>
<div class="m cw" style="left:367px;top:921px;">00 00 00 00</div>
<div class="m cw" style="left:463px;top:921px;">................</div>
<div class="m cd" style="left:7px;top:934px;">00402220</div>
<div class="m cw" style="left:79px;top:934px;">00 00 00 00</div>
<div class="m cw" style="left:175px;top:934px;">00 00 00 00</div>
<div class="m cw" style="left:271px;top:934px;">00 00 00 00</div>
<div class="m cw" style="left:367px;top:934px;">00 00 00 00</div>
<div class="m cw" style="left:463px;top:934px;">................</div>
<div class="m cd" style="left:7px;top:947px;">00402230</div>
<div class="m cw" style="left:79px;top:947px;">00 00 00 00</div>
<div class="m cw" style="left:175px;top:947px;">00 00 00 00</div>
<div class="m cw" style="left:271px;top:947px;">00 00 00 00</div>
<div class="m cw" style="left:367px;top:947px;">00 00 00 00</div>
<div class="m cw" style="left:463px;top:947px;">................</div>
<div class="m cd" style="left:7px;top:960px;">00402240</div>
<div class="m cw" style="left:79px;top:960px;">00 00 00 00</div>
<div class="m cw" style="left:175px;top:960px;">00 00 00 00</div>
<div class="m cw" style="left:271px;top:960px;">00 00 00 00</div>
<div class="m cw" style="left:367px;top:960px;">00 00 00 00</div>
<div class="m cw" style="left:463px;top:960px;">................</div>
<div class="m cd" style="left:7px;top:973px;">00402250</div>
<div class="m cw" style="left:79px;top:973px;">00 00 00 00</div>
<div class="m cw" style="left:175px;top:973px;">00 00 00 00</div>
<div class="m cw" style="left:271px;top:973px;">00 00 00 00</div>
<div class="m cw" style="left:367px;top:973px;">00 00 00 00</div>
<div class="m cw" style="left:463px;top:973px;">................</div>
<div class="a" style="left:79px;top:789px;width:88px;height:2px;background:#28c83c"></div>
<div class="a" style="left:79px;top:854px;width:88px;height:2px;background:#8a9cf0"></div>
<div class="vl" style="left:1529px;top:748px;height:240px;background:#3a3a3a"></div>
<div class="tu" style="left:1533px;top:752px"></div>
<div class="trk" style="left:1532px;top:765px;width:10px;height:203px"></div>
<div class="thm" style="left:1532px;top:773px;width:10px;height:97px"></div>
<div class="td" style="left:1533px;top:973px"></div>
<div class="vl" style="left:1549px;top:719px;height:270px"></div>
<div class="sel" style="left:1551px;top:720px;width:989px;height:13px"></div>
<div class="vl" style="left:1622px;top:720px;height:247px;background:#444"></div>
<div class="vl" style="left:1696px;top:720px;height:247px;background:#444"></div>
<div class="m " style="left:1555px;top:720px;color:#90e860">0019FDC4</div>
<div class="m cw" style="left:1627px;top:720px;">0040123C</div>
<div class="m cr" style="left:1702px;top:720px"><span class="k">返回到</span> crackme2.sub_401128+114 <span class="k">自</span> crackme2.sub_4013B8</div>
<div class="m cd" style="left:1555px;top:733px;">0019FDC8</div>
<div class="m cw" style="left:1627px;top:733px;">0040217E</div>
<div class="m cw" style="left:1702px;top:733px;">"|W@G\\X"</div>
<div class="m cd" style="left:1555px;top:746px;">0019FDCC</div>
<div class="m cw" style="left:1627px;top:746px;">0040217E</div>
<div class="m cw" style="left:1702px;top:746px;">"|W@G\\X"</div>
<div class="m cp" style="left:1555px;top:759px;">0019FDD0</div>
<div class="m cw" style="left:1627px;top:759px;">00401128</div>
<div class="m cr" style="left:1702px;top:759px"><span class="k">返回到</span> crackme2.sub_401128 <span class="k">自</span> crackme2.004014E2</div>
<div class="m cd" style="left:1555px;top:772px;">0019FDD4</div>
<div class="m cw" style="left:1627px;top:772px;">00000111</div>
<div class="m cd" style="left:1555px;top:785px;">0019FDD8</div>
<div class="m cw" style="left:1627px;top:785px;">00000000</div>
<div class="m cd" style="left:1555px;top:798px;">0019FDDC</div>
<div class="m cw" style="left:1627px;top:798px;">0019FE08</div>
<div class="m cd" style="left:1555px;top:811px;">0019FDE0</div>
<div class="m cw" style="left:1630px;top:811px;">74D647AB</div>
<div class="m cr" style="left:1702px;top:811px"><span class="k">返回到</span> user32.74D647AB <span class="k">自</span> ???</div>
<div class="m cd" style="left:1555px;top:824px;">0019FDE4</div>
<div class="m cw" style="left:1630px;top:824px;">000B0764</div>
<div class="m cd" style="left:1555px;top:837px;">0019FDE8</div>
<div class="m cw" style="left:1630px;top:837px;">00000111</div>
<div class="m cd" style="left:1555px;top:850px;">0019FDEC</div>
<div class="m cw" style="left:1630px;top:850px;">00000066</div>
<div class="m cd" style="left:1555px;top:863px;">0019FDF0</div>
<div class="m cw" style="left:1630px;top:863px;">00000000</div>
<div class="m cd" style="left:1555px;top:876px;">0019FDF4</div>
<div class="m cw" style="left:1630px;top:876px;">00000000</div>
<div class="m cd" style="left:1555px;top:889px;">0019FDF8</div>
<div class="m cw" style="left:1630px;top:889px;">DCBAABCD</div>
<div class="m cp" style="left:1555px;top:902px;">0019FDFC</div>
<div class="m cw" style="left:1630px;top:902px;">00401128</div>
<div class="m cr" style="left:1702px;top:902px"><span class="k">返回到</span> crackme2.sub_401128 <span class="k">自</span> crackme2.004014E2</div>
<div class="m cd" style="left:1555px;top:915px;">0019FE00</div>
<div class="m cw" style="left:1630px;top:915px;">00000111</div>
<div class="m cd" style="left:1555px;top:928px;">0019FE04</div>
<div class="m cw" style="left:1630px;top:928px;">00000000</div>
<div class="m cd" style="left:1555px;top:941px;">0019FE08</div>
<div class="m cw" style="left:1630px;top:941px;">0019FEEC</div>
<div class="m cd" style="left:1555px;top:954px;">0019FE0C</div>
<div class="m cw" style="left:1630px;top:954px;">74D452AC</div>
<div class="m cr" style="left:1702px;top:954px"><span class="k">返回到</span> user32.74D452AC <span class="k">自</span> user32.74D64780</div>
<div class="a" style="left:1624px;top:814px;width:2px;height:138px;background:#ee8a74"></div>
<div class="a" style="left:1624px;top:814px;width:5px;height:2px;background:#ee8a74"></div>
<div class="a" style="left:1624px;top:950px;width:5px;height:2px;background:#ee8a74"></div>
<div class="a" style="left:1624px;top:957px;width:2px;height:10px;background:#ee8a74"></div>
<div class="a" style="left:1624px;top:957px;width:5px;height:2px;background:#ee8a74"></div>
<div class="tu" style="left:2545px;top:724px"></div>
<div class="trk" style="left:2544px;top:736px;width:10px;height:215px"></div>
<div class="thm" style="left:2544px;top:926px;width:10px;height:25px"></div>
<div class="td" style="left:2545px;top:957px"></div>
<div class="tl" style="left:1555px;top:973px"></div>
<div class="trk" style="left:1567px;top:972px;width:957px;height:10px"></div>
<div class="thm" style="left:1567px;top:972px;width:344px;height:10px"></div>
<div class="tr" style="left:2528px;top:973px"></div>
<div class="u" style="left:0px;top:996px;color:#f0f0f0;"><b>命令</b>:</div>
<div class="a" style="left:38px;top:993px;width:2416px;height:20px;background:#333"></div>
<div class="u" style="left:2460px;top:996px;color:#f0f0f0;"><b>默认</b></div>
<div class="td" style="left:2546px;top:1001px;border-width:4px;border-top-width:5px;border-top-color:#8a8a8a"></div>
<div class="u" style="left:13px;top:1021px;color:#9c9c3c;"><b>已暂停</b></div>
<div class="u" style="left:66px;top:1024px;color:#e0e0e0;">crackme2.exe: 004013C2 -&gt; 004013CA (0x00000009 bytes)</div>
<div class="u" style="left:2422px;top:1023px;color:#e8e8e8;"><b>已调试时间</b>:  2:14:38:58</div>
</body></html>
